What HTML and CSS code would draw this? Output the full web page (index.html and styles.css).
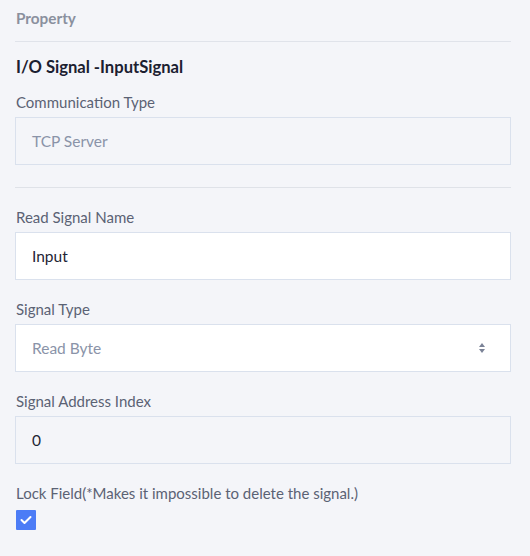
FILE: index.html
```html
<!DOCTYPE html>
<html>
<head>
<meta charset="utf-8">
<link rel="stylesheet" href="styles.css">
</head>
<body>
<div class="panel">
  <div class="panel-header">Property</div>
  <div class="title">I/O Signal -InputSignal</div>
  <div class="field">
    <div class="label">Communication Type</div>
    <div class="box disabled"><span class="muted">TCP Server</span></div>
  </div>
  <div class="divider"></div>
  <div class="field">
    <div class="label">Read Signal Name</div>
    <div class="box"><span class="value">Input</span></div>
  </div>
  <div class="field">
    <div class="label">Signal Type</div>
    <div class="box select"><span class="muted">Read Byte</span>
      <svg class="arrows" width="8" height="12" viewBox="0 0 8 12"><path d="M4 1 L7 5 L1 5 Z M1 7 L7 7 L4 11 Z" fill="#7b8397"/></svg>
    </div>
  </div>
  <div class="field">
    <div class="label">Signal Address Index</div>
    <div class="box disabled"><span class="value">0</span></div>
  </div>
  <div class="field">
    <div class="label lock">Lock Field(*Makes it impossible to delete the signal.)</div>
    <div class="checkbox">
      <svg width="12" height="10" viewBox="0 0 12 10"><path d="M1.5 5 L4.5 8 L10.5 2" fill="none" stroke="#fff" stroke-width="2" stroke-linecap="round" stroke-linejoin="round"/></svg>
    </div>
  </div>
</div>
</body>
</html>
```
FILE: styles.css
```css
html, body {
  margin: 0;
  padding: 0;
  background: #f4f5f9;
}
body {
  font-family: "Lato", "Noto Sans", sans-serif;
  font-size: 15px;
  color: #5b6274;
}
.panel {
  padding: 0 19px 0 15px;
  display: flex;
  flex-direction: column;
}
.panel-header {
  height: 41px;
  line-height: 37px;
  border-bottom: 1px solid #e0e3ea;
  font-weight: 700;
  font-size: 15.3px;
  color: #8a909e;
  padding-left: 1px;
}
.title {
  margin-top: 15px;
  line-height: 20px;
  font-weight: 700;
  font-size: 16.6px;
  color: #1b2030;
  padding-left: 1px;
}
.field {
  display: flex;
  flex-direction: column;
  gap: 5px;
  margin-top: 15px;
}
.divider + .field { margin-top: 19px; }
.field + .field { margin-top: 19px; }
.label {
  line-height: 20px;
  padding-left: 1px;
}
.lock { margin-bottom: 2px; }
.box {
  height: 46px;
  border: 1px solid #dae1ed;
  background: #ffffff;
  display: flex;
  align-items: center;
  padding: 0 16px;
  font-size: 15.5px;
}
.box.disabled {
  background: #f4f5f9;
}
.muted { color: #8a93a8; }
.value { color: #1f2535; }
.select { justify-content: space-between; padding-right: 24px; }
.arrows { display: block; }
.divider {
  margin-top: 22px;
  height: 1px;
  background: #dfe2e8;
}
.checkbox {
  width: 20px;
  height: 20px;
  margin-left: 1px;
  background: #4c7cf6;
  border-radius: 1px;
  display: flex;
  align-items: center;
  justify-content: center;
}
```
